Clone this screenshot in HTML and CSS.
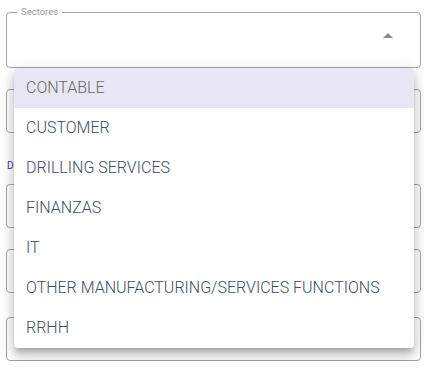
FILE: index.html
```html
<!DOCTYPE html>
<html lang="es">
<head>
    <meta charset="UTF-8">
    <meta name="viewport" content="width=device-width, initial-scale=1.0">
    <title>Sectores</title>
    <link rel="stylesheet" href="styles.css">
</head>
<body>
    <div class="form">
        <div class="field field-select">
            <span class="field-label">Sectores</span>
            <svg class="arrow" viewBox="0 0 24 24" width="24" height="24">
                <path d="M7 14l5-5 5 5z" fill="#8a8a8a"/>
            </svg>
        </div>

        <div class="field field-gap"></div>

        <div class="section-label">Departamento</div>

        <div class="field"></div>
        <div class="field field-gap"></div>
        <div class="field field-last"></div>

        <ul class="menu">
            <li class="selected">CONTABLE</li>
            <li>CUSTOMER</li>
            <li>DRILLING SERVICES</li>
            <li>FINANZAS</li>
            <li>IT</li>
            <li>OTHER MANUFACTURING/SERVICES FUNCTIONS</li>
            <li>RRHH</li>
        </ul>
    </div>
</body>
</html>
```

FILE: styles.css
```css
body {
    margin: 0;
    padding: 0;
    background: #fff;
    font-family: 'Roboto', 'Liberation Sans', sans-serif;
}
.form {
    position: relative;
    padding: 12px 3px 0 6px;
    display: flex;
    flex-direction: column;
}
.field {
    height: 42px;
    border: 1px solid #a3a3a3;
    border-radius: 4px;
}
.field-select {
    position: relative;
    height: 54px;
}
.field-label {
    position: absolute;
    top: -7px;
    left: 10px;
    padding: 0 4px;
    background: #fff;
    font-size: 9.5px;
    line-height: 12px;
    color: #9a9a9a;
}
.arrow {
    position: absolute;
    right: 20px;
    top: 11px;
}
.field-gap {
    margin-top: 21px;
}
.section-label {
    margin: 27px 0 12px 1px;
    font-size: 10px;
    line-height: 12px;
    color: #3d3f8f;
}
.field-last {
    margin-top: 24px;
}
.menu {
    position: absolute;
    top: 68px;
    left: 14px;
    width: 400px;
    margin: 0;
    padding: 0;
    list-style: none;
    background: #fff;
    border-radius: 4px;
    overflow: hidden;
    box-shadow: 0 5px 5px -3px rgba(0, 0, 0, 0.2),
                0 8px 10px 1px rgba(0, 0, 0, 0.14),
                0 3px 14px 2px rgba(0, 0, 0, 0.12);
}
.menu li {
    height: 40px;
    line-height: 40px;
    padding: 0 12px;
    font-size: 16px;
    font-weight: 300;
    color: #3e4c60;
    white-space: nowrap;
}
.menu li.selected {
    background: #e8e6f4;
    color: #666;
}
```
